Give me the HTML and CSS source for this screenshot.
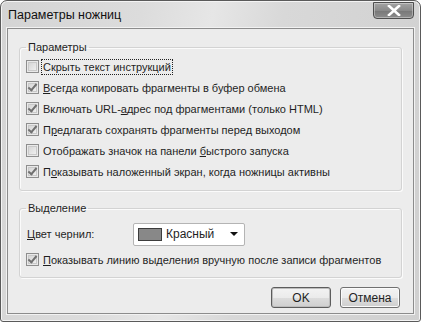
FILE: index.html
```html
<!DOCTYPE html>
<html lang="ru">
<head>
<meta charset="utf-8">
<title>Параметры ножниц</title>
<link rel="stylesheet" href="styles.css">
</head>
<body>
<div class="window">
  <div class="titlebar">
    <span class="title">Параметры ножниц</span>
    <div class="close">
      <svg width="14" height="11" viewBox="0 0 14 11"><path d="M2 1 L12 10 M12 1 L2 10" stroke="#fff" stroke-width="2.6" stroke-linecap="square"/></svg>
    </div>
  </div>
  <div class="client">
    <fieldset class="group g1">
      <legend>Параметры</legend>
      <div class="cb"><span class="box"></span><span class="text focus">Скрыть текст инструкций</span></div>
      <div class="cb"><span class="box checked"></span><span class="text"><u>В</u>сегда копировать фрагменты в буфер обмена</span></div>
      <div class="cb"><span class="box checked"></span><span class="text">Включать URL-<u>а</u>дрес под фрагментами (только HTML)</span></div>
      <div class="cb"><span class="box checked"></span><span class="text">П<u>р</u>едлагать сохранять фрагменты перед выходом</span></div>
      <div class="cb"><span class="box"></span><span class="text">Отображать значок на панели <u>б</u>ыстрого запуска</span></div>
      <div class="cb"><span class="box checked"></span><span class="text">П<u>о</u>казывать наложенный экран, когда ножницы активны</span></div>
    </fieldset>
    <fieldset class="group g2">
      <legend>Выделение</legend>
      <div class="inkrow">
        <span class="label"><u>Ц</u>вет чернил:</span>
        <div class="combo">
          <span class="swatch"></span>
          <span class="ctext">Красный</span>
          <span class="arrow"></span>
        </div>
      </div>
      <div class="cb cb2"><span class="box checked"></span><span class="text"><u>П</u>оказывать линию выделения вручную после записи фрагментов</span></div>
    </fieldset>
    <div class="buttons">
      <button class="btn default">OK</button>
      <button class="btn">Отмена</button>
    </div>
  </div>
</div>
</body>
</html>
```

FILE: styles.css
```css
html, body {
  margin: 0;
  padding: 0;
  background: #ffffff;
}
body {
  width: 421px;
  height: 324px;
  overflow: hidden;
  font-family: "Liberation Sans", Arial, sans-serif;
  font-size: 11px;
  color: #1f1f1f;
}
.window {
  box-sizing: border-box;
  width: 421px;
  height: 322px;
  border: 1px solid #5a5a5a;
  border-radius: 7px 7px 3px 3px;
  background: linear-gradient(100deg, #d4d4d4 0%, #dcdcdc 30%, #e6e6e6 45%, #d8d8d8 60%, #d0d0d0 100%);
  box-shadow: inset 0 0 0 1px #f4f4f4;
  padding: 0 6px 7px 6px;
  display: flex;
  flex-direction: column;
}
.titlebar {
  height: 27px;
  display: flex;
  justify-content: space-between;
  align-items: flex-start;
}
.title {
  font-size: 12.5px;
  color: #111;
  margin-top: 7px;
  margin-left: 1px;
}
.close {
  width: 41px;
  height: 17px;
  margin-top: 1px;
  box-sizing: border-box;
  border: 1px solid #4e4e4e;
  border-radius: 0 0 4px 4px;
  background: linear-gradient(#a4a4a4, #8a8a8a 50%, #777 51%, #8c8c8c);
  box-shadow: inset 0 0 0 1px rgba(255,255,255,0.35);
  display: flex;
  align-items: center;
  justify-content: center;
}
.client {
  flex: 1;
  border: 1px solid #8c8c8c;
  box-shadow: 0 0 0 1px #f2f2f2;
  background: #ececec;
  padding: 0 11px 0 11px;
  display: flex;
  flex-direction: column;
}
.group {
  margin: 0;
  padding: 0 0 0 6px;
  border: 1px solid #d3d3d3;
  box-shadow: inset 1px 1px 0 #fbfbfb, 1px 1px 0 #fbfbfb;
  border-radius: 3px;
  min-width: 0;
}
.group legend {
  padding: 0 2px;
  font-size: 11px;
  line-height: 14px;
  color: #1f1f1f;
}
.g1 {
  margin-top: 11px;
  height: 151px;
  box-sizing: border-box;
  padding-top: 2px;
}
.g2 {
  margin-top: 10px;
  height: 77px;
  box-sizing: border-box;
  padding-top: 0;
}
.cb {
  display: flex;
  align-items: center;
  height: 21px;
  white-space: nowrap;
}
.cb2 {
  margin-top: 2px;
}
.box {
  box-sizing: border-box;
  width: 13px;
  height: 13px;
  border: 1px solid #8e8e8e;
  background: linear-gradient(135deg, #cfcfcf, #f6f6f6);
  box-shadow: inset 0 0 0 1px #e9e9e9, inset 0 0 0 2px #c9c9c9;
  margin-right: 3px;
  flex: none;
  position: relative;
}
.box.checked::after {
  content: "";
  position: absolute;
  left: 3px;
  top: 0px;
  width: 3px;
  height: 7px;
  border: solid #707070;
  border-width: 0 2px 2px 0;
  transform: rotate(40deg);
}
.text {
  padding: 0 1px;
  line-height: 14px;
}
.text u, .label u {
  text-decoration-thickness: 1px;
  text-underline-offset: 1px;
}
.focus {
  outline: 1px dotted #222;
  outline-offset: 0;
}
.inkrow {
  display: flex;
  align-items: center;
  height: 26px;
  margin-top: 6px;
}
.label {
  width: 106px;
  padding-left: 1px;
}
.combo {
  box-sizing: border-box;
  width: 112px;
  height: 23px;
  border: 1px solid #b4b4b4;
  border-radius: 2px;
  background: #fff;
  display: flex;
  align-items: center;
  padding-left: 4px;
}
.swatch {
  box-sizing: border-box;
  width: 24px;
  height: 13px;
  border: 1px solid #3c3c3c;
  background: #888;
  margin-right: 4px;
}
.ctext {
  flex: 1;
  font-size: 12px;
}
.arrow {
  width: 0;
  height: 0;
  border-left: 4px solid transparent;
  border-right: 4px solid transparent;
  border-top: 4px solid #111;
  margin-right: 6px;
}
.buttons {
  display: flex;
  justify-content: flex-end;
  gap: 9px;
  margin-top: auto;
  margin-bottom: 5px;
  padding-right: 2px;
}
.btn {
  box-sizing: border-box;
  width: 60px;
  height: 21px;
  border: 1px solid #707070;
  border-radius: 3px;
  background: linear-gradient(#f3f3f3, #ebebeb 50%, #dddddd 51%, #cfcfcf);
  box-shadow: inset 0 0 0 1px #fbfbfb;
  font-family: "Liberation Sans", Arial, sans-serif;
  font-size: 12px;
  color: #1f1f1f;
  padding: 0;
}
.btn.default {
  border-color: #5c5c5c;
  box-shadow: inset 0 0 0 1px #bdbdbd;
}
```
